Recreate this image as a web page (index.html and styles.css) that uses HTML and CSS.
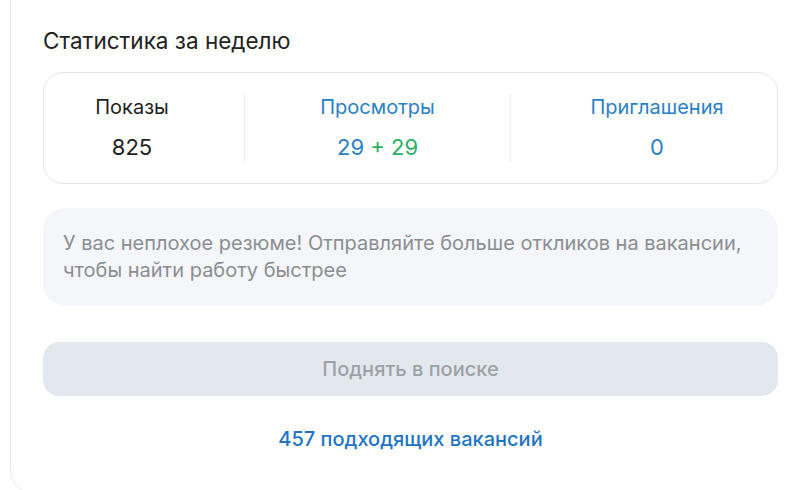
FILE: index.html
```html
<!DOCTYPE html>
<html lang="ru">
<head>
<meta charset="utf-8">
<link rel="stylesheet" href="styles.css">
</head>
<body>
<div class="card">
  <h2 class="title">Статистика за неделю</h2>
  <div class="stats">
    <div class="stat stat-first">
      <div class="label">Показы</div>
      <div class="value">825</div>
    </div>
    <div class="divider"></div>
    <div class="stat stat-mid">
      <div class="label blue">Просмотры</div>
      <div class="value"><span class="blue">29</span> <span class="green">+ 29</span></div>
    </div>
    <div class="divider"></div>
    <div class="stat stat-last">
      <div class="label blue">Приглашения</div>
      <div class="value blue">0</div>
    </div>
  </div>
  <div class="info">У вас неплохое резюме! Отправляйте больше откликов на вакансии, чтобы найти работу быстрее</div>
  <div class="button">Поднять в поиске</div>
  <div class="link-row"><a class="link">457 подходящих вакансий</a></div>
</div>
</body>
</html>
```
FILE: styles.css
```css
html, body {
  margin: 0;
  padding: 0;
  background: #ffffff;
  overflow: hidden;
}
body {
  width: 800px;
  height: 490px;
  font-family: Inter, "Noto Sans", sans-serif;
  color: #1f1f1f;
}
.card {
  margin: -30px 0 0 10px;
  width: 830px;
  height: 524px;
  box-sizing: border-box;
  border: 1px solid #e9e9e9;
  border-radius: 24px;
  padding: 56px 0 0 32px;
}
.title {
  margin: 0;
  font-size: 22.5px;
  font-weight: 400;
  line-height: 28px;
  color: #222;
}
.stats {
  margin-top: 17px;
  width: 735px;
  height: 112px;
  box-sizing: border-box;
  border: 1px solid #e6e6e6;
  border-radius: 20px;
  display: flex;
  align-items: center;
}
.stat {
  display: flex;
  flex-direction: column;
  align-items: center;
  gap: 16px;
}
.stat-first { width: 176px; margin-right: 24px; }
.stat-mid { flex: 1; }
.stat-last { width: 240px; margin-left: 26px; }
.divider {
  width: 1px;
  height: 68px;
  background: #ececec;
}
.label {
  font-size: 20px;
  line-height: 22px;
}
.value {
  font-size: 22px;
  line-height: 26px;
}
.blue { color: #2b7fc4; }
.green { color: #2fae66; }
.info {
  margin-top: 24px;
  width: 735px;
  box-sizing: border-box;
  background: #f4f6f9;
  border-radius: 22px;
  padding: 22px 20px 22px 20px;
  font-size: 20px;
  line-height: 27px;
  color: #8b8e92;
}
.button {
  margin-top: 36px;
  width: 735px;
  height: 54px;
  box-sizing: border-box;
  background: #e3e8ef;
  border-radius: 16px;
  display: flex;
  align-items: center;
  justify-content: center;
  font-size: 20px;
  font-weight: 500;
  color: #9ca1a7;
}
.link-row {
  width: 735px;
  margin-top: 30px;
  display: flex;
  justify-content: center;
}
.link {
  font-size: 20px;
  font-weight: 500;
  line-height: 26px;
  color: #1f74c4;
}
```
